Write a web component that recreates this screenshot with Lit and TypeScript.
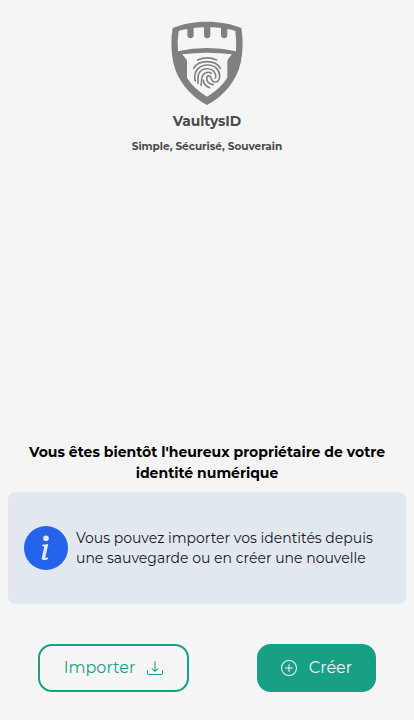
import { LitElement, html, css } from "lit";
import { customElement } from "lit/decorators.js";

@customElement("vaultys-logo")
class VaultysLogo extends LitElement {
  static styles = css`
    :host { display: block; width: 90px; height: 94px; }
    svg { display: block; }
  `;
  render() {
    return html`<svg width="90" height="94" viewBox="0 0 270 282">
      <path fill="#808080" d="M135 17C174 17 210 24 238 36C244 72 243 107 236 140C224 193 188 238 135 267C82 238 46 193 34 140C27 107 26 72 32 36C60 24 96 17 135 17Z"/>
      <path fill="#f5f5f5" d="M50 45Q62 41 76 39V57A9.500 9.500 0 0 0 95 57V36Q110 34 126 34V57A9.500 9.500 0 0 0 145 57V34Q161 34 177 36V57A9.500 9.500 0 0 0 196 57V39Q209 41 220 45Q224 75 222 106Q178 96 135 96Q91 96 48 106Q45 75 50 45Z"/>
      <path fill="#f5f5f5" d="M60 115Q135 105 210 115L198 130Q196 133 196 138V185Q176 217 135 242Q94 217 75 185V138Q75 133 73 130Z"/>
      <g fill="none" stroke="#808080" stroke-width="4.800" stroke-linecap="round">
        <path d="M107 132Q136 119 164 132"/>
        <path d="M95 157C110 130 160 130 175 157"/>
        <path d="M100 195C92 166 112 147 137 147C160 147 173 163 173 181C173 193 166 199 159 198C150 198 148 190 147 185C144 178 135 178 134 184C134 197 141 205 154 206"/>
        <path d="M108 202C109 190 105 181 111 172C121 153 152 154 160 174C162 180 162 184 160 186"/>
        <path d="M117 208C120 197 116 187 123 177C128 169 140 166 148 172"/>
        <path d="M124 193C125 204 132 211 143 215"/>
      </g>
    </svg>`;
  }
}

@customElement("app-root")
class AppRoot extends LitElement {
  static styles = css`
    :host {
      display: flex; flex-direction: column; box-sizing: border-box;
      width: 100%; height: 100vh; padding: 16px 8px 28px;
      background: #f5f5f5; color: #000;
      font-family: Montserrat, Inter, sans-serif;
    }
    header { display: flex; flex-direction: column; align-items: center; color: #4b4b4b; }
    h1, h2, h3, p { margin: 0; white-space: nowrap; }
    h1 { font-size: 13.800px; line-height: 20px; font-weight: 700; margin-top: 1px; letter-spacing: -.05px; }
    h2 { font-size: 10.500px; line-height: 16px; font-weight: 700; margin-top: 8px; }
    main { margin-top: auto; }
    h3 { font-size: 14px; line-height: 21px; font-weight: 700; text-align: center; }
    .info {
      display: flex; align-items: center; gap: 8px; box-sizing: border-box;
      height: 112px; margin-top: 8px; padding: 0 16px; border-radius: 8px;
      background: #e2e8f0; color: #18181b;
    }
    .info svg { flex: none; }
    .info p { font-size: 14px; line-height: 20px; }
    nav { display: flex; justify-content: space-between; padding: 0 30px; margin-top: 40px; }
    button {
      display: flex; align-items: center; justify-content: center; gap: 12px;
      box-sizing: border-box; height: 48px; padding: 0; border: 2px solid #17a086;
      border-radius: 14px; background: transparent; color: #17a086;
      font: 400 16px/24px Montserrat, Inter, sans-serif;
    }
    .import { width: 151px; }
    .create { width: 119px; background: #17a086; color: #f5f5f5; }
  `;
  render() {
    return html`
      <header>
        <vaultys-logo></vaultys-logo>
        <h1>VaultysID</h1>
        <h2>Simple, Sécurisé, Souverain</h2>
      </header>
      <main>
        <h3>Vous êtes bientôt l'heureux propriétaire de votre<br>identité numérique</h3>
        <section class="info">
          <svg width="44" height="44" viewBox="0 0 44 44">
            <circle cx="22" cy="22" r="22" fill="#2563eb"/>
            <circle cx="22" cy="12.300" r="2.800" fill="#e2e8f0"/>
            <path fill="#e2e8f0" d="M18.200 18.700L24.300 17.900L21.400 31.200Q21.200 32.300 24.200 31.600L24 32.900Q21.800 34.200 19.600 34.100Q17.300 34 17.800 31.600L20.200 21.100Q20.400 20 18 19.900Z"/>
          </svg>
          <p>Vous pouvez importer vos identités depuis<br>une sauvegarde ou en créer une nouvelle</p>
        </section>
      </main>
      <nav>
        <button class="import">Importer
          <svg width="16" height="16" viewBox="0 0 16 16" fill="currentColor">
            <path d="M.5 9.900a.5.500 0 0 1 .5.500v2.500a1 1 0 0 0 1 1h12a1 1 0 0 0 1-1v-2.500a.5.500 0 0 1 1 0v2.500a2 2 0 0 1-2 2H2a2 2 0 0 1-2-2v-2.500a.5.500 0 0 1 .5-.5z"/>
            <path d="M7.646 11.854a.5.500 0 0 0 .708 0l3-3a.5.500 0 0 0-.708-.708L8.500 10.293V1.500a.5.500 0 0 0-1 0v8.793L5.354 8.146a.5.500 0 1 0-.708.708z"/>
          </svg>
        </button>
        <button class="create">
          <svg width="16" height="16" viewBox="0 0 16 16" fill="currentColor">
            <path d="M8 15A7 7 0 1 1 8 1a7 7 0 0 1 0 14m0 1A8 8 0 1 0 8 0a8 8 0 0 0 0 16"/>
            <path d="M8 4a.5.500 0 0 1 .5.500v3h3a.5.500 0 0 1 0 1h-3v3a.5.500 0 0 1-1 0v-3h-3a.5.500 0 0 1 0-1h3v-3A.5.500 0 0 1 8 4"/>
          </svg>
          Créer
        </button>
      </nav>
    `;
  }
}
